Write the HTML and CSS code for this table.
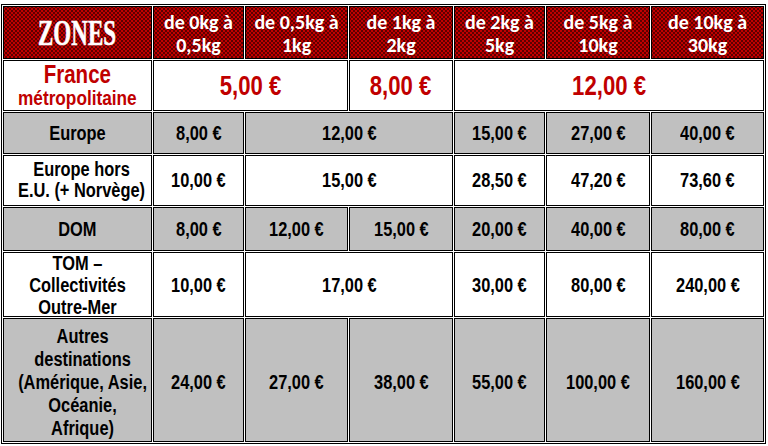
FILE: index.html
```html
<!DOCTYPE html>
<html lang="fr">
<head>
<meta charset="utf-8">
<title>Tarifs</title>
<link rel="stylesheet" href="styles.css">
</head>
<body>
<div class="wrap">
<table class="rates">
  <tr class="r-head">
    <th class="c0 zones"><span class="zones-txt">ZONES</span></th>
    <th class="c1">de 0kg à<br>0,5kg</th>
    <th class="c2">de 0,5kg à<br>1kg</th>
    <th class="c3">de 1kg à<br>2kg</th>
    <th class="c4">de 2kg à<br>5kg</th>
    <th class="c5">de 5kg à<br>10kg</th>
    <th class="c6">de 10kg à<br>30kg</th>
  </tr>
  <tr class="r-france">
    <td class="zone-fr"><span class="n"><span class="fr-big">France</span><br><span class="fr-small">métropolitaine</span></span></td>
    <td colspan="2" class="price-fr"><span class="n">5,00 €</span></td>
    <td class="price-fr"><span class="n">8,00 €</span></td>
    <td colspan="3" class="price-fr"><span class="n">12,00 €</span></td>
  </tr>
  <tr class="r-eu grey">
    <td><span class="n">Europe</span></td>
    <td><span class="n">8,00 €</span></td>
    <td colspan="2"><span class="n">12,00 €</span></td>
    <td><span class="n">15,00 €</span></td>
    <td><span class="n">27,00 €</span></td>
    <td><span class="n">40,00 €</span></td>
  </tr>
  <tr class="r-eux">
    <td><span class="n">Europe hors<br>E.U. (+ Norvège)</span></td>
    <td><span class="n">10,00 €</span></td>
    <td colspan="2"><span class="n">15,00 €</span></td>
    <td><span class="n">28,50 €</span></td>
    <td><span class="n">47,20 €</span></td>
    <td><span class="n">73,60 €</span></td>
  </tr>
  <tr class="r-dom grey">
    <td><span class="n">DOM</span></td>
    <td><span class="n">8,00 €</span></td>
    <td><span class="n">12,00 €</span></td>
    <td><span class="n">15,00 €</span></td>
    <td><span class="n">20,00 €</span></td>
    <td><span class="n">40,00 €</span></td>
    <td><span class="n">80,00 €</span></td>
  </tr>
  <tr class="r-tom">
    <td><span class="n tom-lines">TOM –<br>Collectivités<br>Outre-Mer</span></td>
    <td><span class="n">10,00 €</span></td>
    <td colspan="2"><span class="n">17,00 €</span></td>
    <td><span class="n">30,00 €</span></td>
    <td><span class="n">80,00 €</span></td>
    <td><span class="n">240,00 €</span></td>
  </tr>
  <tr class="r-other grey">
    <td><span class="n">Autres<br>destinations<br>(Amérique, Asie,<br>Océanie,<br>Afrique)</span></td>
    <td><span class="n">24,00 €</span></td>
    <td><span class="n">27,00 €</span></td>
    <td><span class="n">38,00 €</span></td>
    <td><span class="n">55,00 €</span></td>
    <td><span class="n">100,00 €</span></td>
    <td><span class="n">160,00 €</span></td>
  </tr>
</table>
</div>
</body>
</html>
```
FILE: styles.css
```css
html, body {
  margin: 0;
  padding: 0;
  background: #fff;
  overflow: hidden;
}
.wrap {
  padding: 4px 0 0 1px;
}
.rates {
  border: 1px solid #000;
  border-collapse: separate;
  border-spacing: 1px;
  table-layout: fixed;
  width: 765px;
  font-family: "Liberation Sans", Arial, sans-serif;
  font-weight: bold;
  font-size: 20px;
  color: #000;
}
.rates th, .rates td {
  box-sizing: border-box;
  border: 1px solid #000;
  padding: 0;
  text-align: center;
  vertical-align: middle;
}
.c0 { width: 149px; }
.c1 { width: 91px; }
.c2 { width: 103px; }
.c3 { width: 104px; }
.c4 { width: 91px; }
.c5 { width: 104px; }
.c6 { width: 113px; }

.n {
  display: inline-block;
  white-space: nowrap;
  transform: scaleX(0.82);
}

.r-head th {
  background-color: #c00000;
  background-image:
    radial-gradient(circle, rgba(30,0,0,0.95) 0.6px, transparent 0.9px),
    radial-gradient(circle, rgba(30,0,0,0.95) 0.6px, transparent 0.9px);
  background-size: 4px 4px, 4px 4px;
  background-position: 0 0, 2px 2px;
  color: #fff;
  font-family: Carlito, Lato, "Open Sans", sans-serif;
  font-size: 20px;
  line-height: 23px;
  font-weight: bold;
  padding-top: 3px;
}
.r-head th.zones { padding-top: 1px; }
.zones-txt {
  display: inline-block;
  font-family: "Liberation Serif", "Times New Roman", serif;
  font-size: 36px;
  line-height: 40px;
  -webkit-text-stroke: 0.6px #fff;
  transform: scaleX(0.64);
}
.r-head { height: 53px; }
.r-france { height: 51px; }
.r-eu { height: 42px; }
.r-eux { height: 51px; }
.r-dom { height: 44px; }
.r-tom { height: 65px; }
.r-other { height: 124px; }

.rates td { line-height: 22px; }
.r-eux td { line-height: 21px; }
.r-eux td:first-child { padding-bottom: 1px; }
.tom-lines {
  display: block;
  height: 63px;
  line-height: 22px;
  margin-top: -2px;
}
.r-other td { line-height: 23px; padding-top: 5px; }

.grey td { background: #c0c0c0; }

.zone-fr {
  color: #c00000;
}
.zone-fr .n { line-height: 22px; }
.fr-big { font-size: 25px; }
.fr-small { font-size: 21px; }
.price-fr {
  color: #c00000;
  font-size: 27px;
}
```
